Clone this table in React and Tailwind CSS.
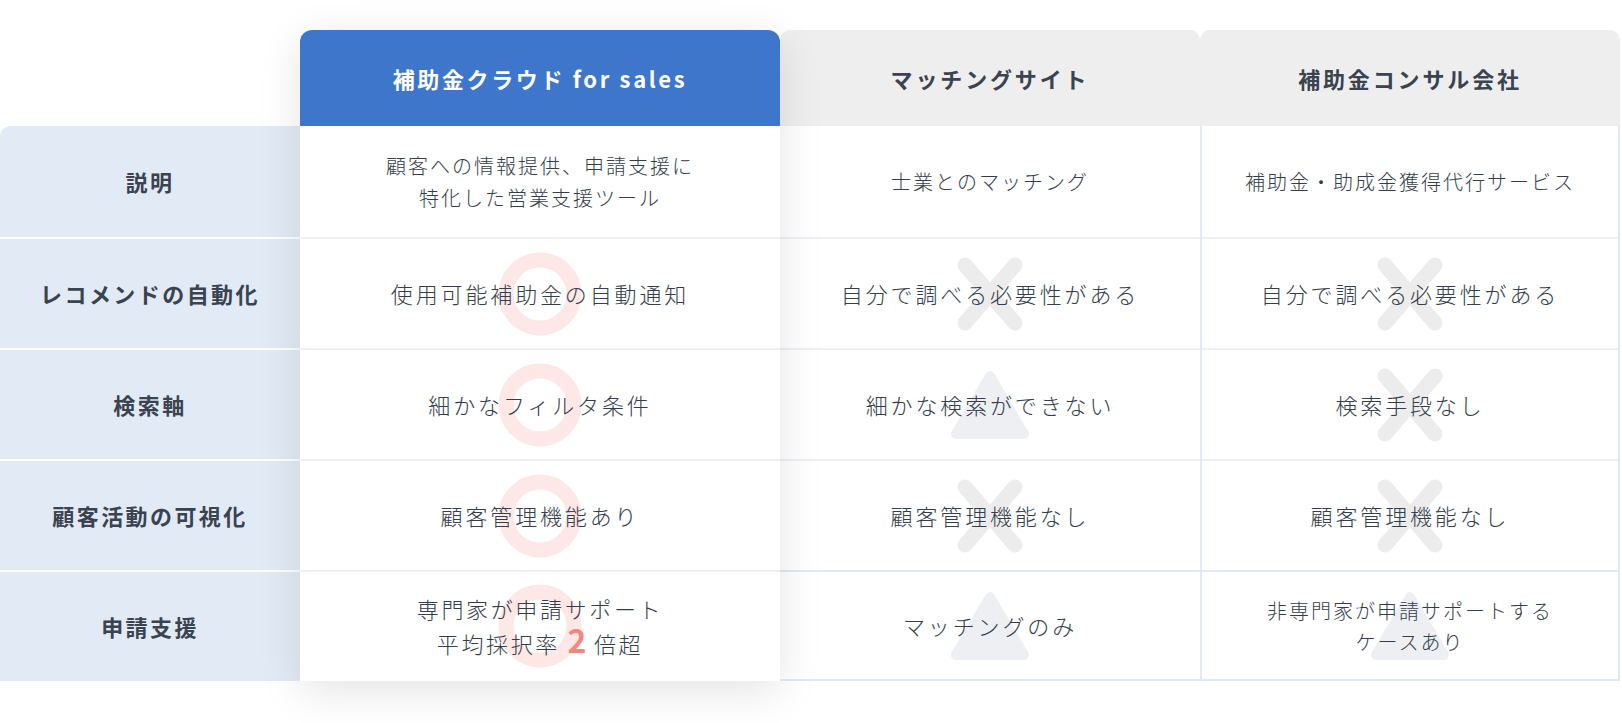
import React from "react";

const CircleMark = () => (
    <svg width="84" height="84" viewBox="0 0 84 84">
        <circle cx="42" cy="42" r="34" fill="none" stroke="#fde7e7" strokeWidth="15" />
    </svg>
);

const CrossMark = () => (
    <svg width="72" height="78" viewBox="0 0 72 78">
        <path d="M11 10 L61 68 M61 10 L11 68" stroke="#ececec" strokeWidth="15" strokeLinecap="round" />
    </svg>
);

const TriangleMark = () => (
    <svg width="80" height="72" viewBox="0 0 80 72">
        <path d="M40 7 L74 65 L6 65 Z" fill="#edeff2" stroke="#edeff2" strokeWidth="10" strokeLinejoin="round" />
    </svg>
);

const marks = { o: CircleMark, x: CrossMark, t: TriangleMark };

const labels = ["説明", "レコメンドの自動化", "検索軸", "顧客活動の可視化", "申請支援"];

const matching = [
    { text: "士業とのマッチング", small: true },
    { text: "自分で調べる必要性がある", mark: "x" },
    { text: "細かな検索ができない", mark: "t" },
    { text: "顧客管理機能なし", mark: "x" },
    { text: "マッチングのみ", mark: "t" },
];

const consult = [
    { text: "補助金・助成金獲得代行サービス", small: true },
    { text: "自分で調べる必要性がある", mark: "x" },
    { text: "検索手段なし", mark: "x" },
    { text: "顧客管理機能なし", mark: "x" },
    { text: ["非専門家が申請サポートする", "ケースあり"], mark: "t", small: true },
];

function Cell({ item, last, first }) {
    const Mark = item.mark ? marks[item.mark] : null;
    const lines = Array.isArray(item.text) ? item.text : [item.text];
    const border = last ? "border-t-2 border-b-2 border-[#e2e8f4]" : first ? "" : "border-t-2 border-[#eef0f3]";
    return (
        <div className={`relative h-[111px] flex items-center justify-center bg-white ${border}`}>
            {Mark && (
                <div className="absolute inset-0 flex items-center justify-center">
                    <Mark />
                </div>
            )}
            <div className={`relative text-center font-light text-[#343e4b] ${item.small ? "text-[20px] leading-[31px] tracking-[0.1em]" : "text-[22px] leading-[31px] tracking-[0.13em]"}`}>
                {lines.map((l) => (
                    <div key={l}>{l}</div>
                ))}
            </div>
        </div>
    );
}

export default function App() {
    return (
        <div className="w-[1622px] h-[723px] bg-white pt-[30px] font-['Noto_Sans_CJK_JP','Noto_Sans',sans-serif] overflow-hidden">
            <div className="flex">
                {/* row labels */}
                <div className="w-[300px] pt-[96px]">
                    <div className="rounded-tl-[10px] overflow-hidden">
                        {labels.map((label, i) => (
                            <div
                                key={label}
                                className={`h-[111px] flex items-center justify-center bg-[#e2eaf6] text-[22px] font-bold tracking-[0.11em] text-[#3a4350] ${i > 0 ? "border-t-2 border-white" : ""}`}
                            >
                                {label}
                            </div>
                        ))}
                    </div>
                </div>

                {/* our product */}
                <div className="relative z-10 w-[480px] rounded-t-[12px] shadow-[0_10px_44px_rgba(0,0,0,0.11)] bg-white">
                    <div className="h-[96px] rounded-t-[12px] bg-[#3d76cb] flex items-center justify-center text-white text-[22px] font-bold tracking-[0.12em]">
                        補助金クラウド for sales
                    </div>
                    <div className="h-[111px] flex items-center justify-center text-center font-light text-[20px] leading-[32px] tracking-[0.1em] text-[#343e4b]">
                        <div>
                            <div>顧客への情報提供、申請支援に</div>
                            <div>特化した営業支援ツール</div>
                        </div>
                    </div>
                    {["使用可能補助金の自動通知", "細かなフィルタ条件", "顧客管理機能あり"].map((t) => (
                        <div key={t} className="relative h-[111px] border-t-2 border-[#f0f0f0] flex items-center justify-center">
                            <div className="absolute inset-0 flex items-center justify-center">
                                <CircleMark />
                            </div>
                            <span className="relative font-light text-[22px] tracking-[0.13em] text-[#343e4b]">{t}</span>
                        </div>
                    ))}
                    <div className="relative h-[110px] border-t-2 border-[#f0f0f0] flex items-center justify-center">
                        <div className="absolute inset-0 flex items-center justify-center">
                            <CircleMark />
                        </div>
                        <div className="relative text-center font-light text-[22px] leading-[31px] tracking-[0.12em] text-[#343e4b]">
                            <div>専門家が申請サポート</div>
                            <div>
                                平均採択率 <span className="text-[32px] font-bold text-[#f6877e] tracking-normal">2</span> 倍超
                            </div>
                        </div>
                    </div>
                </div>

                {/* matching sites */}
                <div className="w-[420px]">
                    <div className="h-[96px] rounded-t-[10px] bg-[#eeeeee] flex items-center justify-center text-[22px] font-bold tracking-[0.13em] text-[#3a4350]">
                        マッチングサイト
                    </div>
                    {matching.map((item, i) => (
                        <Cell key={i} item={item} first={i === 0} last={i === matching.length - 1} />
                    ))}
                </div>

                {/* consulting firms */}
                <div className="w-[420px]">
                    <div className="h-[96px] rounded-t-[10px] bg-[#eeeeee] flex items-center justify-center text-[22px] font-bold tracking-[0.13em] text-[#3a4350]">
                        補助金コンサル会社
                    </div>
                    <div className="border-l-2 border-r-2 border-[#e2e8f4]">
                        {consult.map((item, i) => (
                            <Cell key={i} item={item} first={i === 0} last={i === consult.length - 1} />
                        ))}
                    </div>
                </div>
            </div>
        </div>
    );
}
